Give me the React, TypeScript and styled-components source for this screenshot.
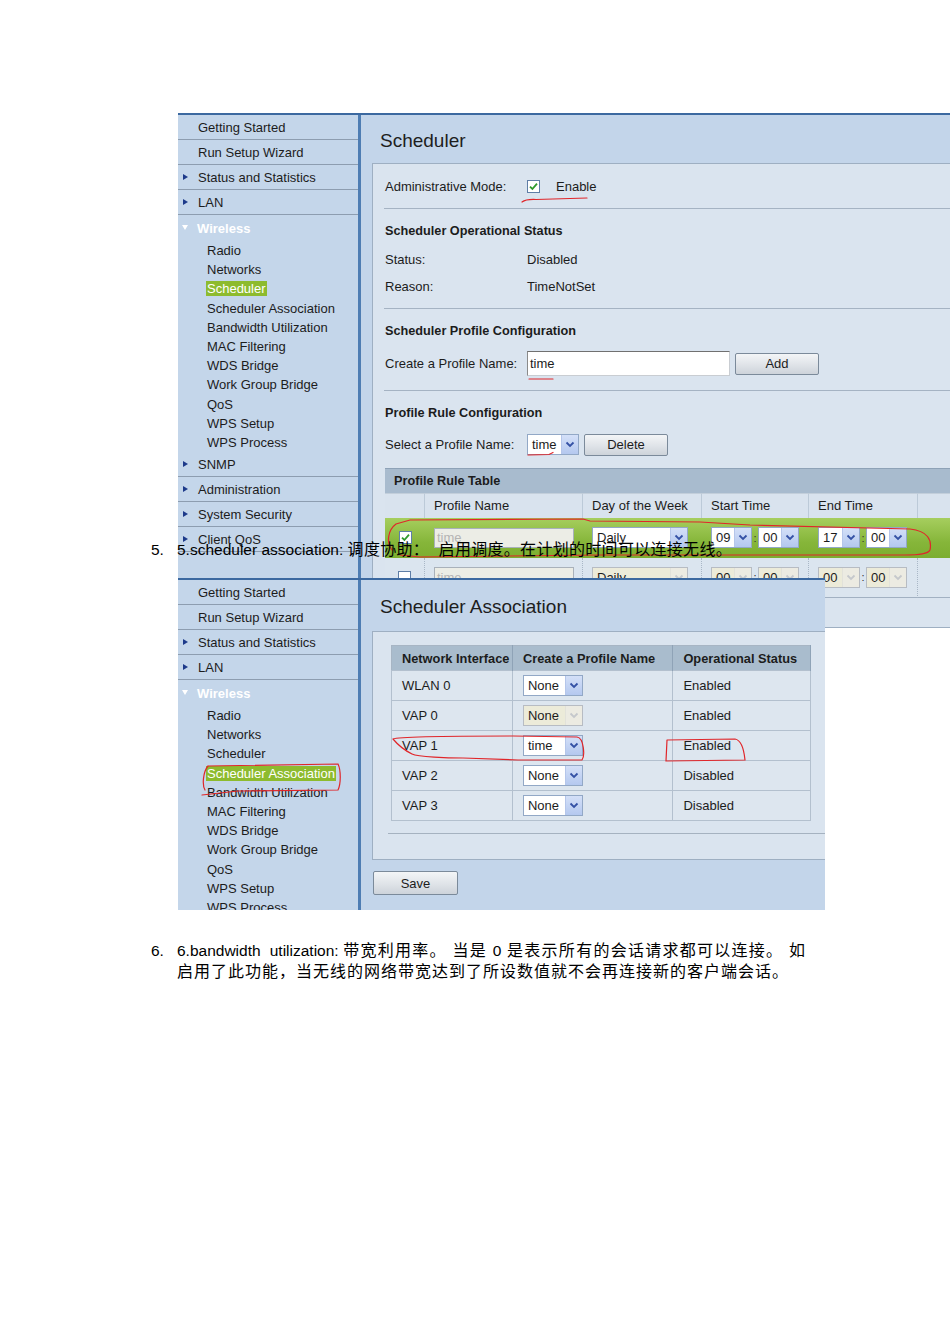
import styled, { createGlobalStyle } from "styled-components";

const GlobalStyle = createGlobalStyle`
  html, body {
    margin: 0;
    padding: 0;
    background: #ffffff;
  }
  body {
    font-family: "Liberation Sans", Arial, sans-serif;
  }
`;

const Page = styled.div`
  position: relative;
  width: 950px;
  height: 1344px;
  overflow: hidden;
  background: #ffffff;
  padding-top: 113px;
  box-sizing: border-box;
`;

/* ---------- screenshot frame ---------- */

const Frame = styled.div<{ $w: number; $h: number; $overlap?: number }>`
  position: relative;
  z-index: 1;
  margin-left: 178px;
  margin-top: ${({ $overlap }) => -($overlap ?? 0)}px;
  width: ${({ $w }) => $w}px;
  height: ${({ $h }) => $h}px;
  display: flex;
  overflow: hidden;
  box-sizing: border-box;
  border-top: 2px solid #3c69a0;
  background: #c3d5ea;
  font-family: "Liberation Sans", Arial, sans-serif;
  font-size: 13px;
  color: #1c1c1c;
`;

const Side = styled.nav`
  width: 180px;
  flex-shrink: 0;
  background: #c4d6ea;
  border-right: 3px solid #4e7db3;
  display: flex;
  flex-direction: column;
`;

const NavRow = styled.div<{ $arrow?: boolean }>`
  position: relative;
  height: 24px;
  flex-shrink: 0;
  border-bottom: 1px solid #8d9db0;
  display: flex;
  align-items: center;
  padding-left: 20px;
  white-space: nowrap;

  ${({ $arrow }) =>
    $arrow &&
    `
    &::before {
      content: "";
      position: absolute;
      left: 5px;
      top: 9px;
      border-left: 5px solid #1d3a8a;
      border-top: 3px solid transparent;
      border-bottom: 3px solid transparent;
    }
  `}
`;

const GroupHead = styled.div`
  position: relative;
  height: 26px;
  flex-shrink: 0;
  display: flex;
  align-items: center;
  padding-left: 19px;
  color: #ffffff;
  font-weight: bold;

  &::before {
    content: "";
    position: absolute;
    left: 4px;
    top: 10px;
    border-top: 5px solid #ffffff;
    border-left: 3px solid transparent;
    border-right: 3px solid transparent;
  }
`;

const SubItem = styled.div`
  height: 19.2px;
  flex-shrink: 0;
  display: flex;
  align-items: center;
  padding-left: 29px;
  white-space: nowrap;
`;

const Hilite = styled.span<{ $on: boolean }>`
  padding: 0 1px;
  margin-left: -1px;
  line-height: 15px;
  ${({ $on }) => $on && `background: #8dbb2e; color: #ffffff;`}
`;

const Main = styled.div`
  flex: 1;
  min-width: 0;
  display: flex;
  flex-direction: column;
`;

const Title = styled.h1<{ $top: number; $bottom: number }>`
  margin: 0;
  padding: ${({ $top, $bottom }) => `${$top}px 0 ${$bottom}px 19px`};
  font-size: 19px;
  font-weight: normal;
  line-height: 24px;
  color: #1e1e1e;
  white-space: nowrap;
`;

const Panel = styled.div<{ $w: number; $pad?: string; $grow?: boolean }>`
  margin-left: 11px;
  width: ${({ $w }) => $w}px;
  flex-shrink: 0;
  ${({ $grow }) => $grow && `flex: 1;`}
  box-sizing: border-box;
  background: #dae4ef;
  border: 1px solid #9eafc2;
  padding: ${({ $pad }) => $pad ?? "0"};
`;

const Section = styled.div<{ $line?: boolean; $pb?: number }>`
  margin-left: 11px;
  padding: 10px 0 ${({ $pb }) => $pb ?? 10}px 1px;
  ${({ $line }) => $line && `border-bottom: 1px solid #a5b3c3;`}
`;

const Heading = styled.div`
  height: 24px;
  display: flex;
  align-items: center;
  font-weight: bold;
  font-size: 12.7px;
`;

const Field = styled.div<{ $h: number; $mt?: number }>`
  height: ${({ $h }) => $h}px;
  margin-top: ${({ $mt }) => $mt ?? 0}px;
  display: flex;
  align-items: center;
  white-space: nowrap;
`;

const Label = styled.span`
  width: 142px;
  flex-shrink: 0;
`;

const CheckBox = styled.span`
  width: 13px;
  height: 13px;
  box-sizing: border-box;
  border: 1px solid #5f7ea6;
  background: #ffffff;
  display: inline-flex;
  align-items: center;
  justify-content: center;
  flex-shrink: 0;
`;

const CheckText = styled.span`
  margin-left: 16px;
`;

const TextInput = styled.div<{ $w: number; $disabled?: boolean }>`
  width: ${({ $w }) => $w}px;
  height: ${({ $disabled }) => ($disabled ? 20 : 25)}px;
  box-sizing: border-box;
  display: flex;
  align-items: center;
  padding-left: 2px;
  background: ${({ $disabled }) => ($disabled ? "#ecede6" : "#ffffff")};
  color: ${({ $disabled }) => ($disabled ? "#b4b4b4" : "#1c1c1c")};
  border: 1px solid ${({ $disabled }) => ($disabled ? "#a9b1ba" : "#c9cdd2")};
  border-top-color: ${({ $disabled }) => ($disabled ? "#a9b1ba" : "#707070")};
  border-left-color: ${({ $disabled }) => ($disabled ? "#a9b1ba" : "#8a8a8a")};
`;

const Button = styled.div<{ $w: number; $h?: number; $ml?: number; $mt?: number }>`
  width: ${({ $w }) => $w}px;
  height: ${({ $h }) => $h ?? 22}px;
  margin-left: ${({ $ml }) => $ml ?? 5}px;
  margin-top: ${({ $mt }) => $mt ?? 0}px;
  box-sizing: border-box;
  display: flex;
  align-items: center;
  justify-content: center;
  border: 1px solid #7b8a9a;
  border-radius: 2px;
  background: linear-gradient(#f3f5f7, #dfe3e8 55%, #cdd3da);
  color: #1c1c1c;
`;

const SelectBox = styled.div<{ $w: number; $disabled?: boolean }>`
  width: ${({ $w }) => $w}px;
  height: 21px;
  flex-shrink: 0;
  box-sizing: border-box;
  display: flex;
  border: 1px solid ${({ $disabled }) => ($disabled ? "#b7bcc3" : "#92a8c6")};
  background: ${({ $disabled }) => ($disabled ? "#ecebd9" : "#ffffff")};
`;

const SelectValue = styled.span`
  flex: 1;
  padding-left: 4px;
  line-height: 19px;
  overflow: hidden;
  white-space: nowrap;
`;

const SelectArrow = styled.span<{ $disabled?: boolean }>`
  width: 16px;
  display: flex;
  align-items: center;
  justify-content: center;
  border-left: 1px solid ${({ $disabled }) => ($disabled ? "#e2e2da" : "#b5c6ea")};
  background: ${({ $disabled }) =>
    $disabled ? "#ecebe2" : "linear-gradient(#d4e0f8, #b4c8ef)"};
`;

const Colon = styled.span`
  width: 6px;
  text-align: center;
  font-size: 11px;
  color: #333;
`;

/* profile rule table */

const TableBar = styled.div<{ $w: number }>`
  width: ${({ $w }) => $w}px;
  height: 25px;
  box-sizing: border-box;
  margin-top: 9px;
  padding-left: 9px;
  display: flex;
  align-items: center;
  background: #a8bbce;
  border-top: 1px solid #8ea2b7;
  font-weight: bold;
  font-size: 12.7px;
`;

const RuleGrid = styled.div`
  display: grid;
  grid-template-columns: 40px 158px 119px 107px 109px 120px;
  width: 653px;
`;

const RuleHead = styled.div`
  height: 25px;
  box-sizing: border-box;
  display: flex;
  align-items: center;
  padding-left: 9px;
  background: #d9e3ee;
  border-right: 1px solid #bccad8;
  border-top: 1px solid #c3cfdb;
  white-space: nowrap;
`;

const RuleCell = styled.div<{ $active?: boolean; $center?: boolean }>`
  height: 40px;
  box-sizing: border-box;
  display: flex;
  align-items: center;
  justify-content: ${({ $center }) => ($center ? "center" : "flex-start")};
  padding-left: ${({ $center }) => ($center ? 0 : 9)}px;
  background: ${({ $active }) =>
    $active ? "linear-gradient(#a6ce5e, #86b63a 60%, #7cae30)" : "#dbe5ef"};
  border-right: ${({ $active }) => ($active ? "none" : "1px dotted #a9b7c6")};
  border-bottom: ${({ $active }) => ($active ? "none" : "1px solid #a2b1c2")};
`;

/* association table */

const AssocTable = styled.table`
  border-collapse: collapse;
  width: 420px;
  border: 1px solid #a7b5c4;
`;

const Th = styled.th<{ $w: number }>`
  width: ${({ $w }) => $w}px;
  height: 25px;
  padding: 0 0 0 10px;
  text-align: left;
  font-size: 12.8px;
  font-weight: bold;
  background: #a9bccd;
  border-right: 1px solid #8fa3b7;
  white-space: nowrap;
  box-sizing: border-box;
`;

const Td = styled.td`
  height: 29px;
  padding: 0 0 0 10px;
  background: #dde6ef;
  border: 1px solid #b3c0ce;
  white-space: nowrap;
`;

const Rule = styled.div`
  margin: 12px 0 0 -3px;
  border-top: 1px solid #a5b2c0;
`;

const Marks = styled.svg`
  position: absolute;
  left: 0;
  top: 0;
  pointer-events: none;
  overflow: visible;
`;

/* document text */

const Note = styled.div<{ $floating?: boolean }>`
  display: flex;
  width: 655px;
  margin-left: 151px;
  font-family: "Liberation Sans", "Noto Sans CJK SC", sans-serif;
  font-size: 16px;
  line-height: 21px;
  color: #000000;
  ${({ $floating }) =>
    $floating
      ? `position: absolute; z-index: 2; left: 0; top: 539px; width: 760px; white-space: nowrap;`
      : `margin-top: 30px;`}
`;

const Num = styled.span`
  width: 26px;
  flex-shrink: 0;
  font-size: 15.5px;
`;

const NoteText = styled.div<{ $justify?: boolean; $spacing: number }>`
  flex: 1;
  letter-spacing: ${({ $spacing }) => $spacing}px;
  ${({ $justify }) => $justify && `text-align: justify; text-align-last: left;`}
`;

const Latin = styled.span`
  font-size: 15.5px;
  letter-spacing: 0;
`;

/* ---------- pieces ---------- */

const Check = () => (
  <svg width="9" height="9" viewBox="0 0 9 9">
    <path d="M1 4.6 L3.4 7 L8 1.6" fill="none" stroke="#2f9a2c" strokeWidth="1.8" />
  </svg>
);

const Chevron = ({ disabled }: { disabled?: boolean }) => (
  <svg width="10" height="7" viewBox="0 0 10 7">
    <path
      d="M1.5 1.5 L5 5 L8.5 1.5"
      fill="none"
      stroke={disabled ? "#c5c8cc" : "#3451a5"}
      strokeWidth="1.8"
    />
  </svg>
);

function Select({ value, width, disabled }: { value: string; width: number; disabled?: boolean }) {
  return (
    <SelectBox $w={width} $disabled={disabled}>
      <SelectValue>{value}</SelectValue>
      <SelectArrow $disabled={disabled}>
        <Chevron disabled={disabled} />
      </SelectArrow>
    </SelectBox>
  );
}

const wirelessItems = [
  "Radio",
  "Networks",
  "Scheduler",
  "Scheduler Association",
  "Bandwidth Utilization",
  "MAC Filtering",
  "WDS Bridge",
  "Work Group Bridge",
  "QoS",
  "WPS Setup",
  "WPS Process",
];

function Sidebar({ active }: { active: string }) {
  return (
    <Side>
      <NavRow>Getting Started</NavRow>
      <NavRow>Run Setup Wizard</NavRow>
      <NavRow $arrow>Status and Statistics</NavRow>
      <NavRow $arrow>LAN</NavRow>
      <GroupHead>Wireless</GroupHead>
      {wirelessItems.map((item) => (
        <SubItem key={item}>
          <Hilite $on={item === active}>{item}</Hilite>
        </SubItem>
      ))}
      {["SNMP", "Administration", "System Security", "Client QoS"].map((item) => (
        <NavRow $arrow key={item}>
          {item}
        </NavRow>
      ))}
    </Side>
  );
}

function SchedulerShot() {
  return (
    <Frame $w={772} $h={515}>
      <Sidebar active="Scheduler" />
      <Main>
        <Title $top={14} $bottom={10}>Scheduler</Title>
        <Panel $w={700} $grow>
          <Section $line>
            <Field $h={24}>
              <Label>Administrative Mode:</Label>
              <CheckBox>
                <Check />
              </CheckBox>
              <CheckText>Enable</CheckText>
            </Field>
          </Section>
          <Section $line $pb={7}>
            <Heading>Scheduler Operational Status</Heading>
            <Field $h={27.5} $mt={2.5}>
              <Label>Status:</Label>Disabled
            </Field>
            <Field $h={27.5}>
              <Label>Reason:</Label>TimeNotSet
            </Field>
          </Section>
          <Section $line $pb={11}>
            <Heading>Scheduler Profile Configuration</Heading>
            <Field $h={30} $mt={6}>
              <Label>Create a Profile Name:</Label>
              <TextInput $w={203}>time</TextInput>
              <Button $w={84}>Add</Button>
            </Field>
          </Section>
          <Section $pb={0}>
            <Heading>Profile Rule Configuration</Heading>
            <Field $h={28} $mt={6}>
              <Label>Select a Profile Name:</Label>
              <Select value="time" width={52} />
              <Button $w={84}>Delete</Button>
            </Field>
            <TableBar $w={653}>Profile Rule Table</TableBar>
            <RuleGrid>
              <RuleHead />
              <RuleHead>Profile Name</RuleHead>
              <RuleHead>Day of the Week</RuleHead>
              <RuleHead>Start Time</RuleHead>
              <RuleHead>End Time</RuleHead>
              <RuleHead />

              <RuleCell $active $center>
                <CheckBox>
                  <Check />
                </CheckBox>
              </RuleCell>
              <RuleCell $active>
                <TextInput $w={140} $disabled>
                  time
                </TextInput>
              </RuleCell>
              <RuleCell $active>
                <Select value="Daily" width={96} />
              </RuleCell>
              <RuleCell $active>
                <Select value="09" width={41} />
                <Colon>:</Colon>
                <Select value="00" width={41} />
              </RuleCell>
              <RuleCell $active>
                <Select value="17" width={42} />
                <Colon>:</Colon>
                <Select value="00" width={41} />
              </RuleCell>
              <RuleCell $active />

              <RuleCell $center>
                <CheckBox />
              </RuleCell>
              <RuleCell>
                <TextInput $w={140} $disabled>
                  time
                </TextInput>
              </RuleCell>
              <RuleCell>
                <Select value="Daily" width={96} disabled />
              </RuleCell>
              <RuleCell>
                <Select value="00" width={41} disabled />
                <Colon>:</Colon>
                <Select value="00" width={41} disabled />
              </RuleCell>
              <RuleCell>
                <Select value="00" width={42} disabled />
                <Colon>:</Colon>
                <Select value="00" width={41} disabled />
              </RuleCell>
              <RuleCell />
            </RuleGrid>
          </Section>
        </Panel>
      </Main>
      <Marks width={772} height={515}>
        <g fill="none" stroke="#e0262a" strokeWidth="1.2" strokeLinecap="round">
          <path d="M344 87 Q348 84 358 84.5 L409 83" />
          <path d="M351 264 L375 264" />
          <path d="M350 340 L371 339.5 L375 337.5" />
          <path d="M214 435 C208 427 210 415 218 409 L232 405 L405 404 L412 406 L522 407 L572 410 L732 414 C750 416 754 425 752 435 C750 439 742 440 727 440 L422 440 L242 442 L222 440" />
        </g>
      </Marks>
    </Frame>
  );
}

const assocRows = [
  { name: "WLAN 0", profile: "None", status: "Enabled" },
  { name: "VAP 0", profile: "None", status: "Enabled", disabled: true },
  { name: "VAP 1", profile: "time", status: "Enabled" },
  { name: "VAP 2", profile: "None", status: "Disabled" },
  { name: "VAP 3", profile: "None", status: "Disabled" },
];

function AssociationShot() {
  return (
    <Frame $w={647} $h={332} $overlap={50}>
      <Sidebar active="Scheduler Association" />
      <Main>
        <Title $top={15} $bottom={12}>Scheduler Association</Title>
        <Panel $w={480} $pad="13px 0 25px 18px">
          <AssocTable>
            <thead>
              <tr>
                <Th $w={121}>Network Interface</Th>
                <Th $w={161}>Create a Profile Name</Th>
                <Th $w={138}>Operational Status</Th>
              </tr>
            </thead>
            <tbody>
              {assocRows.map((row) => (
                <tr key={row.name}>
                  <Td>{row.name}</Td>
                  <Td>
                    <Select value={row.profile} width={60} disabled={row.disabled} />
                  </Td>
                  <Td>{row.status}</Td>
                </tr>
              ))}
            </tbody>
          </AssocTable>
          <Rule />
        </Panel>
        <Button $w={85} $h={24} $ml={12} $mt={11}>
          Save
        </Button>
      </Main>
      <Marks width={647} height={332}>
        <g fill="none" stroke="#e0262a" strokeWidth="1.2" strokeLinecap="round">
          <path d="M30 186 L160 184 C163 190 163 204 160 210 L60 211 L24 215 M30 186 C25 192 24 205 27 210" />
          <path d="M215 159 C222 156 280 156 335 156 L399 157 C406 158 407 176 404 180 L340 180 L285 178 C270 178 240 177 234 174 C226 170 220 165 215 159" />
          <path d="M489 160 L557 159 C563 160 566 170 567 180 L488 181 L489 160" />
        </g>
      </Marks>
    </Frame>
  );
}

export default function App() {
  return (
    <>
      <GlobalStyle />
      <Page>
        <SchedulerShot />
        <AssociationShot />
        <Note $floating>
          <Num>5.</Num>
          <NoteText $spacing={0.3}>
            <Latin>5.scheduler association: </Latin>调度协助：&nbsp;&nbsp;启用调度。在计划的时间可以连接无线。
          </NoteText>
        </Note>
        <Note>
          <Num>6.</Num>
          <NoteText $justify $spacing={1}>
            <Latin>6.bandwidth&nbsp; utilization: </Latin>带宽利用率。&nbsp;当是 <Latin>0</Latin> 是表示所有的会话请求都可以连接。&nbsp;如启用了此功能，当无线的网络带宽达到了所设数值就不会再连接新的客户端会话。
          </NoteText>
        </Note>
      </Page>
    </>
  );
}
